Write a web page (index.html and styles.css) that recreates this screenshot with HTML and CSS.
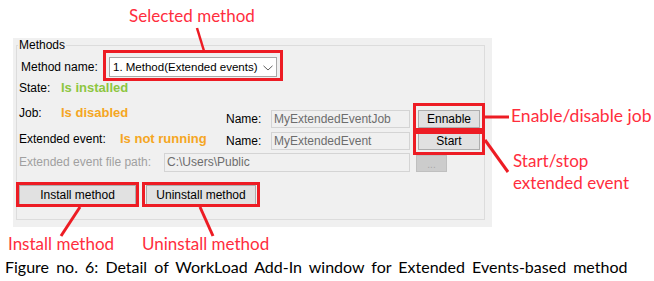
FILE: index.html
```html
<!DOCTYPE html>
<html>
<head>
<meta charset="utf-8">
<title>WorkLoad Add-In detail</title>
<link rel="stylesheet" href="styles.css">
</head>
<body>
<div class="figure">
  <div class="window">
    <fieldset class="group">
      <legend>Methods</legend>
      <div class="row r1">
        <span class="lbl lbl-method">Method name:</span>
        <div class="combo">
          <span class="combo-text">1. Method(Extended events)</span>
          <svg class="chev" width="10" height="6" viewBox="0 0 10 6"><polyline points="0.5,0.8 5,5 9.5,0.8" fill="none" stroke="#606060" stroke-width="1"/></svg>
        </div>
      </div>
      <div class="row r2">
        <span class="lbl key">State:</span>
        <span class="status ok">Is installed</span>
      </div>
      <div class="row r3">
        <span class="lbl key">Job:</span>
        <span class="status warn">Is disabled</span>
        <div class="cluster">
          <span class="name">Name:</span>
          <div class="tb">MyExtendedEventJob</div>
          <button class="btn btn-side">Ennable</button>
        </div>
      </div>
      <div class="row r4">
        <span class="lbl key key-wide">Extended event:</span>
        <span class="status warn">Is not running</span>
        <div class="cluster">
          <span class="name">Name:</span>
          <div class="tb">MyExtendedEvent</div>
          <button class="btn btn-side">Start</button>
        </div>
      </div>
      <div class="row r5">
        <span class="lbl path-lbl">Extended event file path:</span>
        <div class="tb tb-path">C:\Users\Public</div>
        <button class="btn btn-dots">...</button>
      </div>
      <div class="row r6">
        <button class="btn btn-big btn-install">Install method</button>
        <button class="btn btn-big btn-uninstall">Uninstall method</button>
      </div>
    </fieldset>
  </div>
  <p class="caption">Figure no. 6: Detail of WorkLoad Add-In window for Extended Events-based method</p>

  <svg class="marks" width="654" height="281" viewBox="0 0 654 281">
    <g fill="none" stroke="#ed1c24" stroke-width="3">
      <rect x="104.5" y="51.5" width="177" height="28"/>
      <rect x="414.5" y="104.5" width="69" height="25"/>
      <rect x="414.5" y="132.5" width="69" height="21"/>
      <rect x="17.5" y="183.5" width="120" height="22"/>
      <rect x="143.5" y="183.5" width="115" height="22"/>
      <line x1="197" y1="28" x2="204" y2="51" stroke-width="2.5"/>
      <line x1="485" y1="117" x2="509" y2="117"/>
      <line x1="485" y1="140" x2="508" y2="172"/>
      <line x1="80" y1="207" x2="61" y2="236"/>
      <line x1="200" y1="207" x2="213" y2="236"/>
    </g>
  </svg>
  <span class="note note-selected">Selected method</span>
  <span class="note note-enable">Enable/disable job</span>
  <span class="note note-start">Start/stop<br>extended event</span>
  <span class="note note-install">Install method</span>
  <span class="note note-uninstall">Uninstall method</span>
</div>
</body>
</html>
```
FILE: styles.css
```css
* { box-sizing: border-box; }
html, body { margin: 0; padding: 0; background: #fff; }
body {
  width: 654px;
  height: 281px;
  overflow: hidden;
  font-family: "Liberation Sans", Arial, sans-serif;
  font-size: 12px;
  color: #000;
}
.figure {
  position: relative;
  width: 654px;
  height: 281px;
  padding-top: 38px;
}
.window {
  margin-left: 13px;
  width: 479px;
  height: 189px;
  background: #f0f0f0;
  padding: 0 7px 7px 3px;
}
.group {
  margin: 0;
  min-width: 0;
  border: 1px solid #dcdcdc;
  padding: 0 4px 0 2px;
}
.group legend {
  padding: 0 1px;
  margin-left: -1px;
  font-size: 12px;
  line-height: 14px;
}
.row {
  display: flex;
  align-items: flex-start;
}
.r1 { height: 29px; }
.r2 { height: 25px; }
.r3 { height: 24px; }
.r4 { height: 22px; }
.r5 { height: 23px; }
.r6 { height: 44px; }

.lbl { line-height: 14px; white-space: nowrap; }
.lbl-method { margin: 8px 0 0 2px; width: 88px; }
.combo {
  margin-top: 5px;
  width: 168px;
  height: 20px;
  background: #fff;
  border: 1px solid #a8a8a8;
  display: flex;
  align-items: center;
  justify-content: space-between;
  padding: 0 3px 0 3px;
  white-space: nowrap;
}
.combo-text { font-size: 11.5px; }
.chev { display: block; margin-top: 1px; }
.key { width: 42px; }
.key-wide { width: 101px; }
.status {
  font-weight: 700;
  font-size: 13px;
  line-height: 14px;
  white-space: nowrap;
}
.ok { color: #8dc63f; }
.warn { color: #f5a623; }
.r4 .key, .r4 .status { margin-top: 2px; }

.cluster {
  margin-left: auto;
  display: flex;
  align-items: flex-start;
}
.r3 .cluster { margin-top: 4px; }
.r4 .cluster { margin-top: 2px; }
.name {
  width: 45px;
  line-height: 18px;
  color: #000;
}
.tb {
  width: 139px;
  height: 18px;
  border: 1px solid #d4d4d4;
  background: #f0f0f0;
  color: #6d6d6d;
  line-height: 16px;
  padding-left: 2px;
  white-space: nowrap;
  overflow: hidden;
}
.btn {
  font-family: "Liberation Sans", Arial, sans-serif;
  font-size: 12px;
  color: #000;
  background: #e1e1e1;
  border: 1px solid #adadad;
  height: 18px;
  padding: 0;
  line-height: 16px;
  border-radius: 0;
}
.btn-side { width: 62px; margin-left: 8px; }

.path-lbl { width: 145px; margin-top: 3px; color: #a0a0a0; }
.tb-path { width: 246px; height: 19px; margin-top: 1px; line-height: 17px; }
.btn-dots {
  width: 31px;
  height: 17px;
  margin: 3px 0 0 6px;
  background: #cccccc;
  border-color: #bfbfbf;
  color: #a8a8a8;
  font-size: 10px;
  line-height: 18px;
}

.btn-big { height: 20px; margin-top: 10px; line-height: 18px; }
.btn-install { width: 117px; }
.btn-uninstall { width: 110px; margin-left: 10px; }

.caption {
  margin: 31px 0 0 5px;
  font-family: Lato, "Open Sans", sans-serif;
  font-size: 16px;
  line-height: 18px;
  word-spacing: 3px;
  color: #000;
  white-space: nowrap;
}

.marks {
  position: absolute;
  left: 0;
  top: 0;
  pointer-events: none;
}
.note {
  position: absolute;
  font-family: Lato, "Open Sans", sans-serif;
  font-size: 17px;
  line-height: 20px;
  color: #ff2d3d;
  white-space: nowrap;
}
.note-selected { left: 129px; top: 6px; }
.note-enable { left: 511px; top: 106px; font-size: 17.5px; }
.note-start { left: 513px; top: 150px; line-height: 22px; }
.note-install { left: 8px; top: 234px; }
.note-uninstall { left: 142px; top: 234px; }
```
